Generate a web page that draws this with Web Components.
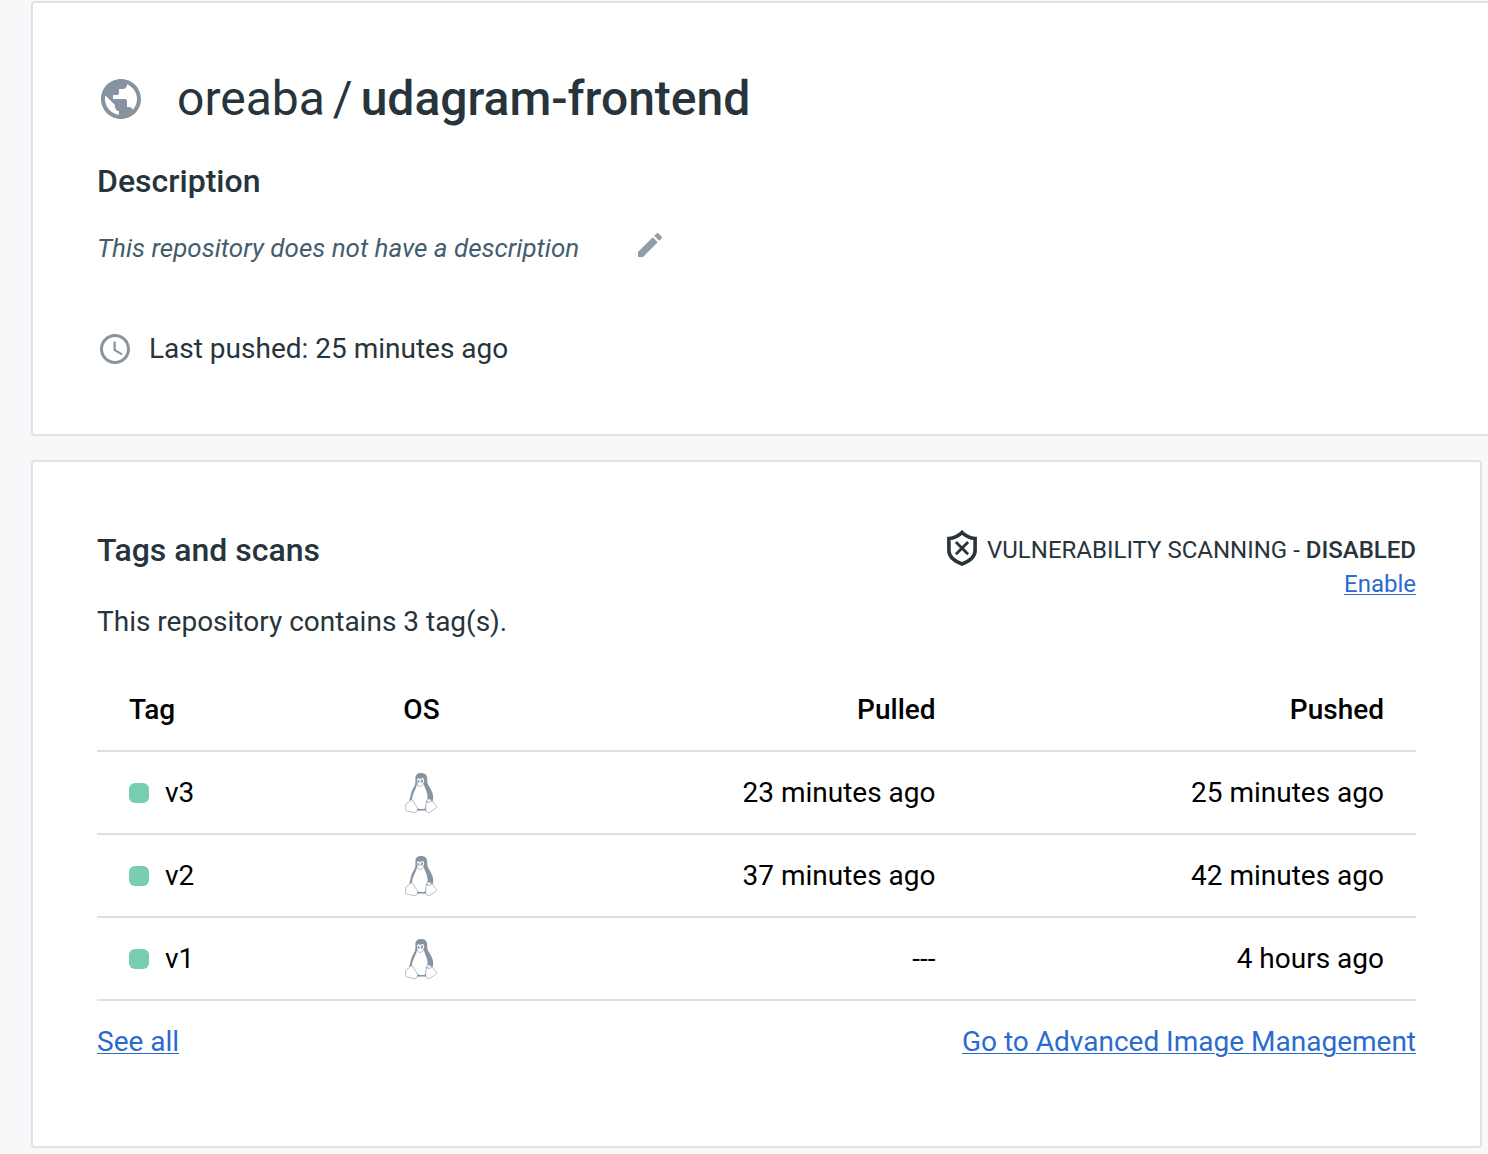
<!DOCTYPE html>
<html lang="en">
<head>
<meta charset="utf-8">
<title>oreaba / udagram-frontend</title>
<style>
body { margin: 0; background: #f7f8fa; font-family: Roboto, "Liberation Sans", sans-serif; font-size: 28px; line-height: 32px; color: #27343c; }
</style>
</head>
<body>
<repo-page></repo-page>
<script>
const define = (name, html, setup) => customElements.define(name, class extends HTMLElement {
  constructor() {
    super();
    const template = document.createElement('template');
    template.innerHTML = html;
    this.attachShadow({ mode: 'open' }).append(template.content.cloneNode(true));
  }
  connectedCallback() { if (setup) setup(this, this.shadowRoot); }
});

const glyphs = {
  globe: ['0 0 24 24', '<path fill="currentColor" d="M12 2C6.48 2 2 6.48 2 12s4.480 10 10 10 10-4.480 10-10S17.520 2 12 2zm-1 17.930c-3.950-.490-7-3.850-7-7.930 0-.620.080-1.210.210-1.790L9 15v1c0 1.100.900 2 2 2v1.930zm6.900-2.540c-.260-.810-1-1.390-1.900-1.390h-1v-3c0-.550-.450-1-1-1H8v-2h2c.550 0 1-.450 1-1V7h2c1.100 0 2-.900 2-2v-.410c2.930 1.190 5 4.060 5 7.410 0 2.080-.800 3.970-2.100 5.390z"/>'],
  pencil: ['0 0 24 24', '<path fill="currentColor" d="M3 17.250V21h3.750L17.810 9.940l-3.750-3.750L3 17.250zM20.710 7.040c.390-.390.390-1.020 0-1.410l-2.340-2.340c-.390-.390-1.020-.390-1.410 0l-1.830 1.830 3.750 3.750 1.830-1.830z"/>'],
  clock: ['0 0 24 24', '<path fill="currentColor" d="M11.990 2C6.470 2 2 6.480 2 12s4.470 10 9.990 10C17.520 22 22 17.520 22 12S17.520 2 11.990 2zM12 20c-4.420 0-8-3.580-8-8s3.580-8 8-8 8 3.580 8 8-3.580 8-8 8zm.5-13H11v6l5.250 3.150.750-1.230-4.500-2.670z"/>'],
  shield: ['0 0 30 36', '<path fill="none" stroke="currentColor" stroke-width="3.600" stroke-linejoin="miter" d="M15 2.400C11.800 5.600 7.200 8 1.900 8.500v12C1.900 26.500 8 31.300 15 34c7-2.700 13.100-7.500 13.100-13.500v-12C22.800 8 18.200 5.600 15 2.400z"/><path stroke="currentColor" stroke-width="2.800" fill="none" d="M8.900 12l12.200 12.200M21.100 12L8.900 24.200"/>'],
  linux: ['0 0 32 40', '<path fill="currentColor" d="M16 0c-4.200 0-5.800 2.600-5.600 6 .1 3.400.3 5.200-1.600 8.200-2.200 3.600-2.800 6.200-3.400 9.200-.4 2-1.400 2.800-1 4.600l5.600 8.400c1.600 1.400 10.400 1.400 12 0l5.800-8.800c1.400-4-.6-9.600-3.200-13.400-2.200-3.200-2.400-5-2.400-8.200C22.200 2 20 0 16 0z"/><path fill="#fff" d="M12.100 6.200c.7-1.200 2.200-1.100 2.700.2 1-.7 1.800-1.700 3.200-1.200 1.600.8 1.300 3.300.7 4.400.1 3.600 1.700 5.500 2.800 8.800.9 2.700 1.400 5.200 1 7.600l-1.200 2.600-1 7.400c-3 1-6 .9-8.600-.2l-2.200-4.800-2.400-3.800c-.5-2.400.9-6 2.200-8.800 1.500-3.100 2.500-5.200 2.800-8.200z"/><path fill="currentColor" d="M12.600 7l1.500.1v1.900l-1.300.3zM16 6.600l1.900-.4.2 2.400-1.800.4z"/><path fill="#fff" stroke="currentColor" stroke-width=".6" d="M12 10.200l3-1.600 3.800 1.400-.7 2-2.800 1.700-2.800-1.400z"/><g fill="#fff" stroke="currentColor" stroke-width=".6" stroke-linejoin="round"><path d="M5.600 26.700c1.700-.4 3.100 2 4.400 4.500 1.500 2.400 3.100 3.500 2.500 5.900-.6 2.600-3.600 3-6.500 1.800-2-.7-4.500-.5-5.300-1.500-.8-1.200.6-2.600-.1-5-.3-2.400 2.800-2 3.800-4z"/><path d="M21.300 28.200c1.200.8 2.500 1.500 4.500-.2l2 .1c1.100 2.500 2.400 4 3.900 5.200.7 1.600-2.200 2.500-4.700 4.600-1.700 1.700-4.300 2.300-5.700.8-1.500-2.300 0-6.500 0-10.500z"/><path d="M21.700 27.600c.4-1.900 3.400-2.100 4.500-.7v1.500c-1.500 1.400-3.600 1.200-4.500-.8z"/></g><path fill="currentColor" d="M12.700 35.200c2.400 1.200 5.100 1.100 7.900 0v2.500c-2.500-.9-5.600-.9-8.100 0z"/>']
};

define('hub-icon', `
<style>
:host { display: block; flex: none; color: #8594a0; }
svg { display: block; width: 100%; height: 100%; }
</style>
<svg aria-hidden="true"></svg>`, (host, root) => {
  const [box, shape] = glyphs[host.getAttribute('name')];
  const svg = root.querySelector('svg');
  svg.setAttribute('viewBox', box);
  svg.innerHTML = shape;
});

define('hub-card', `
<style>
:host { display: block; box-sizing: border-box; padding: 64px; background: #fff; border: 2px solid #e1e2e6; border-radius: 4px; }
:host([bleed]) { border-right: 0; border-top-right-radius: 0; border-bottom-right-radius: 0; }
</style>
<slot></slot>`);

define('repo-summary', `
<style>
:host { display: block; }
.title { display: flex; align-items: center; gap: 32px; }
.title hub-icon { width: 48px; height: 48px; }
h1 { display: flex; gap: 8px; margin: 0; font-size: 48px; line-height: 64px; font-weight: 400; }
h1 b { font-weight: 500; }
h2 { margin: 34px 0 0; font-size: 32px; line-height: 32px; font-weight: 500; }
.desc { display: flex; align-items: flex-start; gap: 55px; margin-top: 32px; }
em { font-size: 26px; line-height: 38px; color: #445d6e; }
button { border: 0; padding: 0; background: none; display: block; }
button hub-icon { width: 32px; height: 32px; color: #929ea7; }
.pushed { display: flex; align-items: center; gap: 16px; margin: 64px 0 3px; }
.pushed hub-icon { width: 36px; height: 36px; }
</style>
<div class="title"><hub-icon name="globe"></hub-icon><h1><span>oreaba</span> <span>/</span> <b>udagram-frontend</b></h1></div>
<h2>Description</h2>
<div class="desc"><em>This repository does not have a description</em><button type="button" aria-label="Edit description"><hub-icon name="pencil"></hub-icon></button></div>
<div class="pushed"><hub-icon name="clock"></hub-icon><span>Last pushed: 25 minutes ago</span></div>`);

define('scan-status', `
<style>
:host { display: flex; flex-direction: column; align-items: flex-end; font-size: 24px; line-height: 28px; }
.line { display: flex; align-items: flex-start; gap: 10px; line-height: 40px; }
b { font-weight: 500; }
hub-icon { width: 30px; height: 36px; color: #27343c; }
a { color: #2a6bcf; text-decoration-thickness: 1px; text-underline-offset: 2px; }
</style>
<div class="line"><hub-icon name="shield"></hub-icon><span>VULNERABILITY SCANNING - <b>DISABLED</b></span></div>
<a href="#enable">Enable</a>`);

define('tag-table', `
<style>
:host { display: block; color: #000; }
table { width: 100%; table-layout: fixed; border-collapse: collapse; }
th, td { height: 81px; padding: 0 32px; text-align: left; border-bottom: 2px solid #dfdfdf; }
th { font-weight: 500; }
.tag { width: 20.8%; box-sizing: border-box; }
.pushed { width: 34%; box-sizing: border-box; }
.os { width: 11%; box-sizing: border-box; }
.num { text-align: right; }
.name { display: flex; align-items: center; gap: 16px; }
.name i { width: 20px; height: 20px; border-radius: 6px; background: #78ceb3; }
hub-icon { width: 36px; height: 40px; }
</style>
<table>
<thead><tr><th class="tag">Tag</th><th class="os">OS</th><th class="num">Pulled</th><th class="num pushed">Pushed</th></tr></thead>
<tbody></tbody>
</table>`, (host, root) => {
  const rows = [['v3', '23 minutes ago', '25 minutes ago'], ['v2', '37 minutes ago', '42 minutes ago'], ['v1', '---', '4 hours ago']];
  root.querySelector('tbody').innerHTML = rows.map(([tag, pulled, pushed]) =>
    `<tr><td><div class="name"><i></i><span>${tag}</span></div></td><td><hub-icon name="linux"></hub-icon></td><td class="num">${pulled}</td><td class="num">${pushed}</td></tr>`).join('');
});

define('tags-panel', `
<style>
:host { display: block; }
header { display: flex; justify-content: space-between; align-items: flex-start; }
h2 { margin: 8px 0 0; font-size: 32px; line-height: 32px; font-weight: 500; }
p { margin: 40px 0 0; }
scan-status { margin-top: 4px; }
tag-table { margin-top: 31px; }
footer { display: flex; justify-content: space-between; margin: 25px 0 24px; }
a { color: #2a6bcf; text-decoration-thickness: 1px; text-underline-offset: 2px; }
</style>
<header><div><h2>Tags and scans</h2><p>This repository contains 3 tag(s).</p></div><scan-status></scan-status></header>
<tag-table></tag-table>
<footer><a href="#tags">See all</a><a href="#images">Go to Advanced Image Management</a></footer>`);

define('repo-page', `
<style>
:host { display: flex; flex-direction: column; gap: 24px; padding: 1px 0 6px 31px; }
.tags { margin-right: 6px; }
</style>
<hub-card bleed><repo-summary></repo-summary></hub-card>
<hub-card class="tags"><tags-panel></tags-panel></hub-card>`);
</script>
</body>
</html>
